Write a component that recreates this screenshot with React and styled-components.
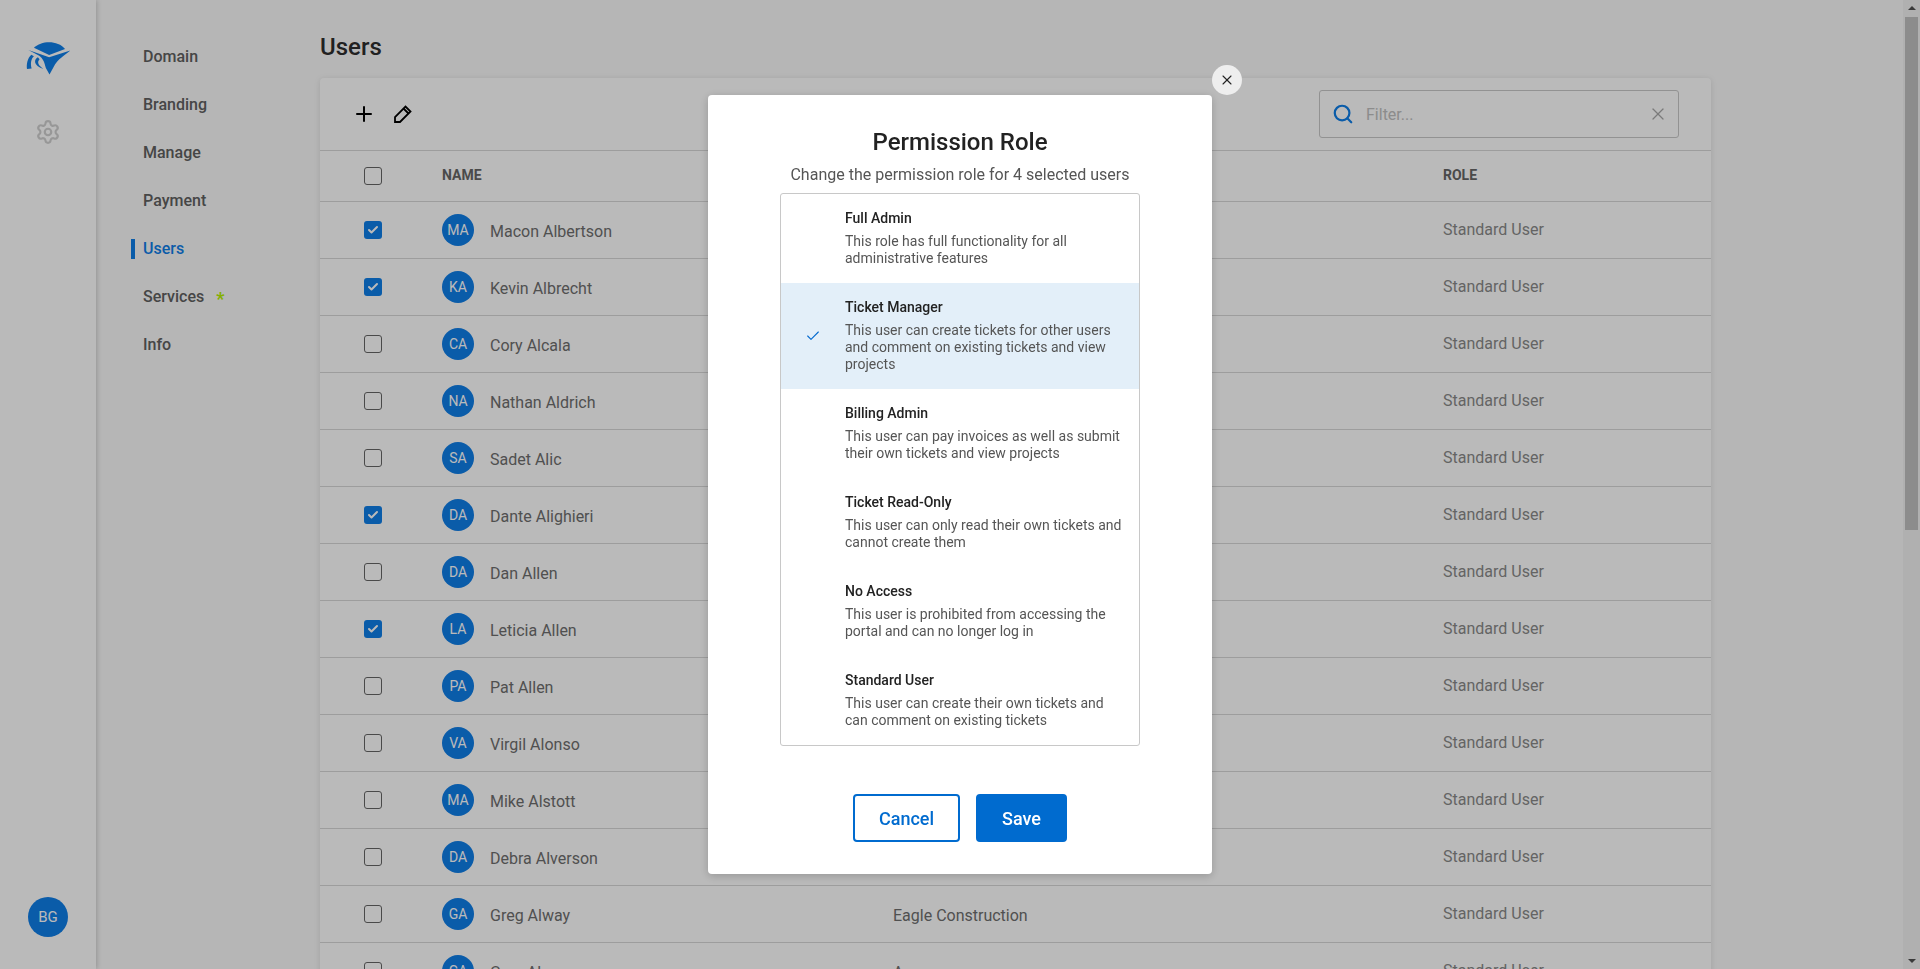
import React from "react";
import styled, { createGlobalStyle } from "styled-components";
import { Check, Plus, Search, Settings, X } from "lucide-react";

const users = [
  { name: "Macon Albertson", initials: "MA", checked: true },
  { name: "Kevin Albrecht", initials: "KA", checked: true },
  { name: "Cory Alcala", initials: "CA" },
  { name: "Nathan Aldrich", initials: "NA" },
  { name: "Sadet Alic", initials: "SA" },
  { name: "Dante Alighieri", initials: "DA", checked: true },
  { name: "Dan Allen", initials: "DA" },
  { name: "Leticia Allen", initials: "LA", checked: true },
  { name: "Pat Allen", initials: "PA" },
  { name: "Virgil Alonso", initials: "VA" },
  { name: "Mike Alstott", initials: "MA" },
  { name: "Debra Alverson", initials: "DA" },
  { name: "Greg Alway", initials: "GA", company: "Eagle Construction" },
  { name: "Gary Alvarez", initials: "GA", company: "Amazon" },
];

const roles = [
  { title: "Full Admin", text: "This role has full functionality for all administrative features" },
  { title: "Ticket Manager", text: "This user can create tickets for other users and comment on existing tickets and view projects", selected: true },
  { title: "Billing Admin", text: "This user can pay invoices as well as submit their own tickets and view projects" },
  { title: "Ticket Read-Only", text: "This user can only read their own tickets and cannot create them" },
  { title: "No Access", text: "This user is prohibited from accessing the portal and can no longer log in" },
  { title: "Standard User", text: "This user can create their own tickets and can comment on existing tickets" },
];

const navItems = ["Domain", "Branding", "Manage", "Payment", "Users", "Services", "Info"];

function Logo() {
  return (
    <LogoSvg viewBox="76 122 136 102">
      <path d="M100 142 C122 120 172 118 194 146 L146 164 Z" />
      <path d="M83 149 L146 171 L210 150 C190 166 172 178 164 192 L147 223 L136 203 C132 190 130 174 112 164 Z" />
      <path d="M92 163 C80 174 77 192 79 206 L93 205 C89 190 91 176 100 168 Z" />
      <path d="M112 171 C99 178 98 196 128 206 C114 196 108 186 117 177 Z" />
    </LogoSvg>
  );
}

function PencilIcon() {
  return (
    <svg width="18" height="18" viewBox="0 0 18 18" fill="none" stroke="currentColor" strokeWidth="1.8">
      <path d="M1 17 V12 L11.5 1.5 L16.5 6.5 L6 17 Z" />
      <path d="M9.5 3.5 L14.5 8.5" />
    </svg>
  );
}

export default function App() {
  return (
    <>
      <GlobalStyle />
      <Page>
        <Sidebar>
          <Logo />
          <GearIcon size={26} strokeWidth={2} />
          <BottomAvatar>BG</BottomAvatar>
        </Sidebar>
        <SubNav>
          {navItems.map((item) => (
            <NavLink key={item} $active={item === "Users"}>
              {item}
              {item === "Services" && <Star>*</Star>}
            </NavLink>
          ))}
        </SubNav>
        <Main>
          <Title>Users</Title>
          <Card>
            <Toolbar>
              <ToolButton><Plus size={24} strokeWidth={2} /></ToolButton>
              <ToolButton><PencilIcon /></ToolButton>
              <FilterBox>
                <SearchIcon size={22} strokeWidth={2.4} />
                <FilterText>Filter...</FilterText>
                <ClearIcon size={20} strokeWidth={1.5} />
              </FilterBox>
            </Toolbar>
            <HeadRow>
              <Box />
              <HeadCell>NAME</HeadCell>
              <HeadCell />
              <HeadCell>ROLE</HeadCell>
            </HeadRow>
            {users.map((user) => (
              <Row key={user.name}>
                <Box $checked={user.checked}>
                  {user.checked && <Check size={12} strokeWidth={4} color="#fff" />}
                </Box>
                <NameCell>
                  <Avatar>{user.initials}</Avatar>
                  <CellText>{user.name}</CellText>
                </NameCell>
                <CellText>{user.company}</CellText>
                <RoleText>Standard User</RoleText>
              </Row>
            ))}
          </Card>
        </Main>
        <Scrollbar>
          <ArrowUp />
          <Thumb />
          <ArrowDown />
        </Scrollbar>
      </Page>
      <Overlay>
        <Dialog>
          <CloseButton><X size={16} strokeWidth={1.6} /></CloseButton>
          <DialogTitle>Permission Role</DialogTitle>
          <DialogSub>Change the permission role for 4 selected users</DialogSub>
          <RoleList>
            {roles.map((role) => (
              <RoleItem key={role.title} $selected={role.selected}>
                <RoleCheck>{role.selected && <Check size={16} strokeWidth={1.6} />}</RoleCheck>
                <div>
                  <RoleTitle>{role.title}</RoleTitle>
                  <RoleDesc>{role.text}</RoleDesc>
                </div>
              </RoleItem>
            ))}
          </RoleList>
          <Actions>
            <CancelButton>Cancel</CancelButton>
            <SaveButton>Save</SaveButton>
          </Actions>
        </Dialog>
      </Overlay>
    </>
  );
}

const GlobalStyle = createGlobalStyle`
  html, body {
    margin: 0;
    height: 100%;
    overflow: hidden;
  }
  body {
    font-family: Roboto, "Liberation Sans", sans-serif;
    background: #fafafa;
  }
  * {
    box-sizing: border-box;
  }
`;

const Page = styled.div`
  display: flex;
  height: 100vh;
  overflow: hidden;
`;

const Sidebar = styled.div`
  width: 96px;
  flex: none;
  background: #fff;
  box-shadow: 1px 0 5px rgba(0, 0, 0, 0.2);
  display: flex;
  flex-direction: column;
  align-items: center;
  padding: 41px 0 32px;
  z-index: 1;
`;

const LogoSvg = styled.svg`
  width: 45px;
  height: 34px;
  flex: none;
  fill: #0f7ee8;
`;

const GearIcon = styled(Settings)`
  margin-top: 44px;
  color: #d0d0d0;
`;

const BottomAvatar = styled.div`
  width: 40px;
  height: 40px;
  margin-top: auto;
  border-radius: 50%;
  background: #0f7ee8;
  color: #fff;
  font-size: 15px;
  display: flex;
  align-items: center;
  justify-content: center;
`;

const SubNav = styled.nav`
  width: 224px;
  flex: none;
  padding: 32px 0 0 47px;
`;

const NavLink = styled.a`
  position: relative;
  display: flex;
  align-items: center;
  height: 48px;
  font-size: 16px;
  font-weight: 500;
  color: ${(props) => (props.$active ? "#0f7ee8" : "#606060")};

  &::before {
    content: "";
    display: ${(props) => (props.$active ? "block" : "none")};
    position: absolute;
    left: -12px;
    top: 15px;
    width: 4px;
    height: 20px;
    background: #0f7ee8;
  }
`;

const Star = styled.span`
  color: #b5f000;
  font-size: 18px;
  font-weight: 700;
  margin: 5px 0 0 12px;
`;

const Main = styled.main`
  flex: 1;
  min-width: 0;
  padding: 0 192px 0 0;
`;

const Title = styled.h1`
  margin: 0;
  height: 78px;
  padding-top: 31px;
  font-size: 24px;
  line-height: 32px;
  font-weight: 500;
  color: #2e2e2e;
`;

const Card = styled.div`
  background: #fff;
  border-radius: 4px 4px 0 0;
  box-shadow: 0 1px 6px rgba(0, 0, 0, 0.12);
`;

const Toolbar = styled.div`
  height: 73px;
  display: flex;
  align-items: center;
  padding: 0 32px 0 28px;
  gap: 7px;
  border-bottom: 1px solid #d8d8d8;
`;

const ToolButton = styled.span`
  width: 32px;
  height: 32px;
  display: flex;
  align-items: center;
  justify-content: center;
  color: #000;
`;

const FilterBox = styled.div`
  width: 360px;
  height: 48px;
  margin-left: auto;
  display: flex;
  align-items: center;
  padding: 0 10px 0 12px;
  border: 1px solid #c8c8c8;
  border-radius: 3px;
`;

const SearchIcon = styled(Search)`
  color: #0f7ee8;
`;

const FilterText = styled.span`
  flex: 1;
  margin-left: 12px;
  font-size: 16px;
  color: #c0c0c0;
`;

const ClearIcon = styled(X)`
  color: #a8a8a8;
`;

const HeadRow = styled.div`
  display: grid;
  grid-template-columns: 122px 451px 550px 1fr;
  align-items: center;
  height: 51px;
  border-bottom: 1px solid #d8d8d8;
`;

const Row = styled(HeadRow)`
  height: 57px;
`;

const HeadCell = styled.span`
  font-size: 14px;
  font-weight: 700;
  color: #666;
  margin-top: -2px;
`;

const Box = styled.span`
  width: 18px;
  height: 18px;
  margin-left: 44px;
  border-radius: 3px;
  border: ${(props) => (props.$checked ? "none" : "1px solid #666")};
  background: ${(props) => (props.$checked ? "#0f7ee8" : "transparent")};
  display: flex;
  align-items: center;
  justify-content: center;
`;

const NameCell = styled.div`
  display: flex;
  align-items: center;
  gap: 16px;
`;

const Avatar = styled.span`
  width: 32px;
  height: 32px;
  border-radius: 50%;
  background: #0f7ee8;
  color: #fff;
  font-size: 14px;
  display: flex;
  align-items: center;
  justify-content: center;
`;

const CellText = styled.span`
  font-size: 16px;
  color: #6e6e6e;
  padding-top: 2px;
`;

const RoleText = styled.span`
  font-size: 16px;
  color: #8a8a8a;
  margin-top: -2px;
`;

const Scrollbar = styled.div`
  width: 17px;
  flex: none;
  background: #f1f1f1;
  display: flex;
  flex-direction: column;
  align-items: center;
`;

const ArrowUp = styled.span`
  width: 0;
  height: 0;
  margin-top: 6px;
  border: 4px solid transparent;
  border-top: 0;
  border-bottom: 4px solid #505050;
`;

const Thumb = styled.span`
  width: 13px;
  height: 513px;
  margin-top: 7px;
  background: #c1c1c1;
`;

const ArrowDown = styled.span`
  width: 0;
  height: 0;
  margin-top: auto;
  margin-bottom: 6px;
  border: 4px solid transparent;
  border-bottom: 0;
  border-top: 4px solid #505050;
`;

const Overlay = styled.div`
  position: fixed;
  inset: 0;
  z-index: 10;
  background: rgba(0, 0, 0, 0.27);
  display: flex;
  justify-content: center;
  align-items: flex-start;
  padding-top: 95px;
`;

const Dialog = styled.div`
  position: relative;
  width: 504px;
  height: 779px;
  padding: 31px 72px 32px;
  display: flex;
  flex-direction: column;
  align-items: center;
  background: #fff;
  border-radius: 4px;
  box-shadow: 0 2px 10px rgba(0, 0, 0, 0.2);
`;

const CloseButton = styled.span`
  position: absolute;
  top: -30px;
  right: -30px;
  width: 30px;
  height: 30px;
  border-radius: 50%;
  background: #eee;
  color: #222;
  display: flex;
  align-items: center;
  justify-content: center;
`;

const DialogTitle = styled.h2`
  margin: 0;
  font-size: 24px;
  line-height: 32px;
  font-weight: 500;
  color: #222;
`;

const DialogSub = styled.p`
  margin: 7px 0 0;
  font-size: 16px;
  line-height: 20px;
  color: #555;
`;

const RoleList = styled.div`
  width: 360px;
  height: 553px;
  flex: none;
  margin-top: 8px;
  border: 1px solid #c8c8c8;
  border-radius: 3px;
  overflow: hidden;
`;

const RoleItem = styled.div`
  display: flex;
  padding: 15px 16px 0 0;
  height: ${(props) => (props.$selected ? "106px" : "89px")};
  background: ${(props) => (props.$selected ? "#e3eff9" : "transparent")};
`;

const RoleCheck = styled.span`
  width: 64px;
  flex: none;
  display: flex;
  align-items: center;
  justify-content: center;
  margin-top: -15px;
  color: #0068ce;
`;

const RoleTitle = styled.div`
  font-size: 14px;
  line-height: 18px;
  font-weight: 500;
  color: #222;
`;

const RoleDesc = styled.div`
  margin-top: 6px;
  font-size: 14px;
  line-height: 17px;
  color: #555;
`;

const Actions = styled.div`
  display: flex;
  justify-content: center;
  gap: 16px;
  margin-top: 48px;
`;

const CancelButton = styled.span`
  width: 107px;
  height: 48px;
  display: flex;
  align-items: center;
  justify-content: center;
  border: 2px solid #006bcf;
  border-radius: 4px;
  color: #006bcf;
  font-size: 18px;
  font-weight: 500;
`;

const SaveButton = styled(CancelButton)`
  width: 91px;
  background: #006bcf;
  color: #fff;
`;
